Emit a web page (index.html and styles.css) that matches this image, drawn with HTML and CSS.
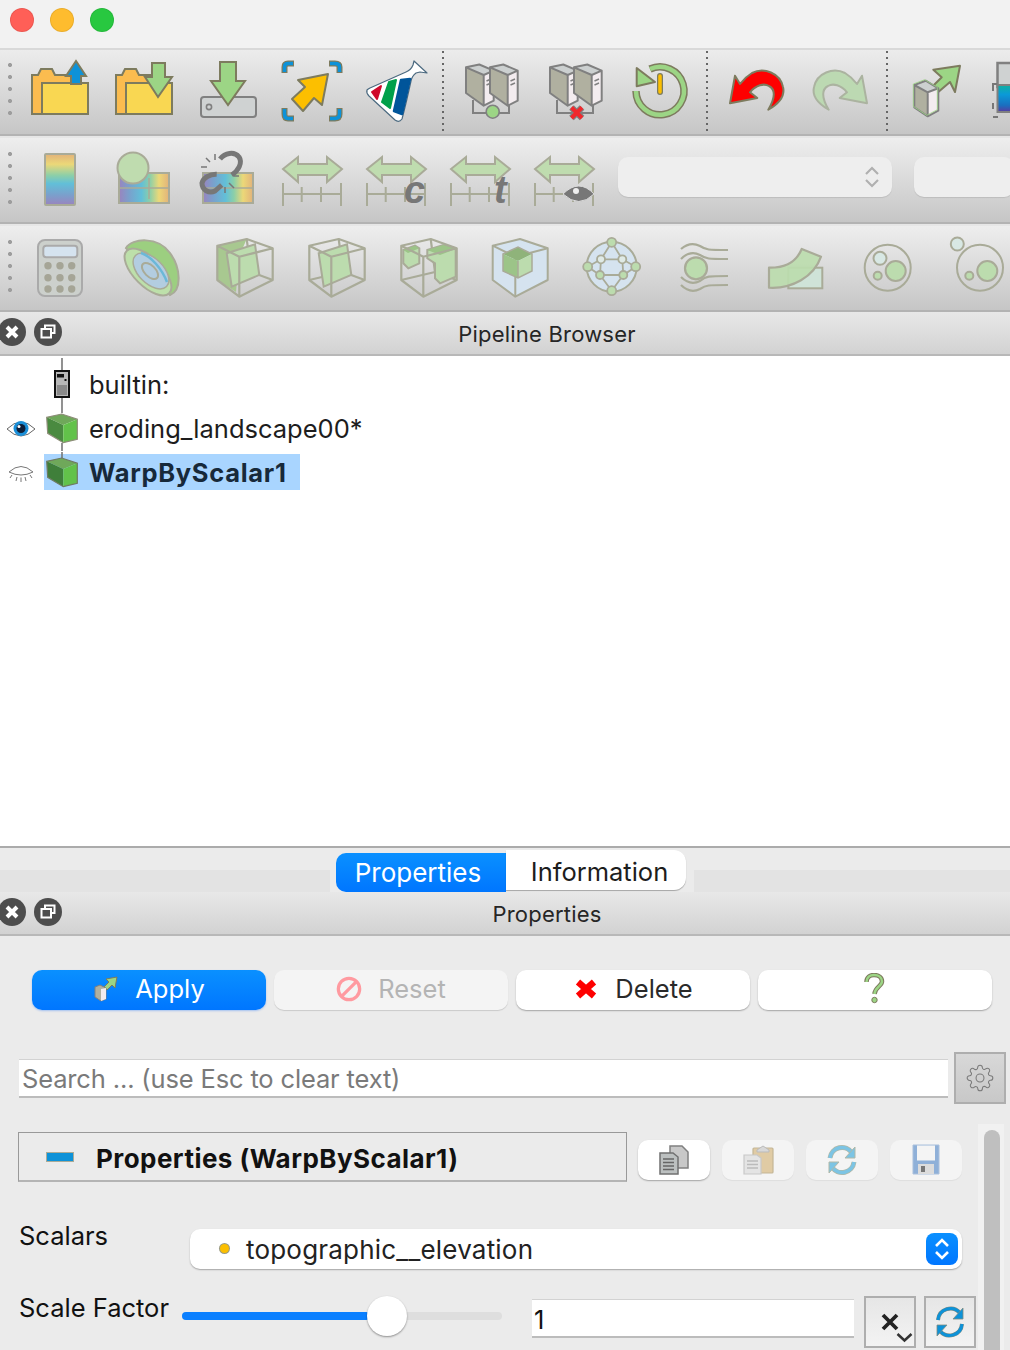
FILE: index.html
```html
<!DOCTYPE html>
<html lang="en">
<head>
<meta charset="utf-8">
<title>ParaView</title>
<link rel="stylesheet" href="styles.css">
</head>
<body>
<svg class="defs" width="0" height="0" aria-hidden="true">
  <defs>
    <linearGradient id="stripes" x1="0" y1="0" x2="0" y2="1">
      <stop offset="0" stop-color="#e2b27a"/><stop offset=".2" stop-color="#ecd878"/><stop offset=".42" stop-color="#8ccfa8"/><stop offset=".58" stop-color="#62bfd8"/><stop offset=".8" stop-color="#7aa0cc"/><stop offset="1" stop-color="#9a84be"/>
    </linearGradient>
    <linearGradient id="rainbow" x1="0" y1="0" x2="1" y2="0">
      <stop offset="0" stop-color="#9a84be"/><stop offset=".2" stop-color="#7aa0cc"/><stop offset=".45" stop-color="#62bfd8"/><stop offset=".62" stop-color="#8ccfa8"/><stop offset=".8" stop-color="#ecd878"/><stop offset="1" stop-color="#e2b27a"/>
    </linearGradient>
    <linearGradient id="vivid" x1="0" y1="0" x2="0" y2="1">
      <stop offset="0" stop-color="#10b0a0"/><stop offset=".35" stop-color="#0a9ad8"/><stop offset=".75" stop-color="#1a6fc0"/><stop offset="1" stop-color="#5a3aa0"/>
    </linearGradient>
    <g id="srv">
      <path d="M6 8.300 19.300 5.500 33.700 11.700 23.700 16Z" fill="#ccd0d0"/>
      <path d="M6 8.300 23.700 16V46.700L6 34Z" fill="#b0b0a0"/>
      <path d="M23.700 16 33.700 11.700V41.700L23.700 46.700Z" fill="#f3ecef"/>
      <path d="M6 8.300 19.300 5.500 33.700 11.700V41.700L23.700 46.700 6 34ZM6 8.300 23.700 16 33.700 11.700M23.700 16V46.700" fill="none" stroke="#808080" stroke-width="2" stroke-linejoin="round"/>
      <path d="M26.500 22 31 20M26.500 26 31 24" stroke="#808080" stroke-width="1.500"/>
    </g>
    <g id="ruler" fill="none" stroke="#a9ab98" stroke-width="2">
      <path d="M3 22 18 10V17H47V10L62 22 47 35V28H18V35Z" fill="#bfdcaf"/>
      <path d="M3 36V59M3 47H61M21.700 40V55M41 40V55M61 36V59"/>
    </g>
    <g id="wire-back" fill="none" stroke="#a9ab98" stroke-width="2.200" stroke-linejoin="round">
      <path d="M34.700 4 39 37M39 37 5.300 45M39 37 60.700 45"/>
    </g>
    <g id="wire-front" fill="none" stroke="#a9ab98" stroke-width="2.200" stroke-linejoin="round">
      <path d="M5.300 10.700 34.700 4 60.700 13.300V45L27.300 61.700 5.300 45ZM5.300 10.700 27.300 21.700 60.700 13.300M27.300 21.700V61.700"/>
    </g>
  </defs>
</svg>

<div class="titlebar">
  <span class="light red"></span><span class="light yellow"></span><span class="light green"></span>
</div>

<div class="toolbar">
  <span class="handle"></span>
  <span class="slot"><svg class="ic" viewBox="0 0 64 64">
    <path d="M4 55V16H10L13 10H24L27 16H44V55Z" fill="#fbbc4f" stroke="#7d7b5e" stroke-width="2"/>
    <rect x="14" y="24" width="46" height="31" fill="#f9d752" stroke="#7d7b5e" stroke-width="2"/>
    <path d="M48 2 38 17H43V25H53V17H58Z" fill="#0d92d8" stroke="#7d7b5e" stroke-width="2"/>
  </svg></span>
  <span class="slot"><svg class="ic" viewBox="0 0 64 64">
    <path d="M4 55V16H10L13 10H24L27 16H44V55Z" fill="#fbbc4f" stroke="#7d7b5e" stroke-width="2"/>
    <rect x="14" y="24" width="46" height="31" fill="#f9d752" stroke="#7d7b5e" stroke-width="2"/>
    <path d="M40 4H53V18H60L46 38 33 18H40Z" fill="#9cd585" stroke="#7d7b5e" stroke-width="2"/>
  </svg></span>
  <span class="slot"><svg class="ic" viewBox="0 0 64 64">
    <rect x="5" y="38" width="55" height="20" rx="3" fill="#cfd2d2" stroke="#808080" stroke-width="2"/>
    <circle cx="13" cy="48" r="2.600" fill="none" stroke="#808080" stroke-width="1.600"/>
    <path d="M24 3H40V22H49L32 46 15 22H24Z" fill="#9cd585" stroke="#7d7b5e" stroke-width="2"/>
  </svg></span>
  <span class="slot"><svg class="ic" viewBox="0 0 64 64">
    <g fill="none" stroke="#7d7b5e" stroke-width="6"><path d="M4.500 14V8Q4.500 4.500 8 4.500H14M49 4.500H55Q59.500 4.500 59.500 8V14M4.500 49V55Q4.500 59.500 8 59.500H14M49 59.500H55Q59.500 59.500 59.500 55V49"/></g>
    <g fill="none" stroke="#0d92d8" stroke-width="3.500"><path d="M4.500 13V8Q4.500 4.500 8 4.500H13M50 4.500H55Q59.500 4.500 59.500 8V13M4.500 50V55Q4.500 59.500 8 59.500H13M50 59.500H55Q59.500 59.500 59.500 55V50"/></g>
    <path d="M48 15 18 21 25 28 12 40 23 52 34 39 42 46Z" fill="#fcbf00" stroke="#7d7b5e" stroke-width="2" stroke-linejoin="round"/>
  </svg></span>
  <span class="slot"><svg class="ic" viewBox="0 0 64 64">
    <path d="M3 31Q2 34 5 37L31 61Q35 64 38 60Q42 45 47 22Q48 17 52 14L56 13 63 14 50 2 49 6Q47 11 42 13L6 29Q4 30 3 31Z" fill="#fff" stroke="#4c6a80" stroke-width="1.200" stroke-linejoin="round"/>
    <path d="M8 33 17 27 13 40Z" fill="#cf0a2c" stroke="#cf0a2c" stroke-width="2" stroke-linejoin="round"/>
    <path d="M25 23 32 21 26 49 18 43Z" fill="#00a04a" stroke="#00a04a" stroke-width="2" stroke-linejoin="round"/>
    <path d="M37 21 46 20 38 55 30 52Z" fill="#00559a" stroke="#00559a" stroke-width="2.500" stroke-linejoin="round"/>
  </svg></span>
  <span class="sep"></span>
  <span class="slot"><svg class="ic" viewBox="0 0 64 64">
    <path d="M13 41V54H49V42" fill="none" stroke="#808080" stroke-width="2"/>
    <use href="#srv"/><use href="#srv" x="24"/>
    <circle cx="32.700" cy="52.700" r="6.500" fill="#9cd585" stroke="#808080" stroke-width="1.600"/>
  </svg></span>
  <span class="slot"><svg class="ic" viewBox="0 0 64 64">
    <path d="M13 41V54H49V42" fill="none" stroke="#808080" stroke-width="2"/>
    <use href="#srv"/><use href="#srv" x="24"/>
    <path d="M27.500 48.500 38 59M38 48.500 27.500 59" stroke="#808080" stroke-width="6.500"/>
    <path d="M27.500 48.500 38 59M38 48.500 27.500 59" stroke="#f0282c" stroke-width="4"/>
  </svg></span>
  <span class="slot"><svg class="ic" viewBox="0 0 64 64">
    <path d="M22 10A24 24 0 1 1 8 32" fill="none" stroke="#7d7b5e" stroke-width="7.500"/>
    <path d="M22 10A24 24 0 1 1 8 32" fill="none" stroke="#9cd585" stroke-width="4.500"/>
    <path d="M8.700 9V27.300L27 23Z" fill="#9cd585" stroke="#7d7b5e" stroke-width="2" stroke-linejoin="round"/>
    <path d="M32 17V33" stroke="#7d7b5e" stroke-width="6" stroke-linecap="round"/>
    <path d="M32 17V33" stroke="#fcbf00" stroke-width="3.500" stroke-linecap="round"/>
  </svg></span>
  <span class="sep"></span>
  <span class="slot"><svg class="ic" viewBox="0 0 64 64">
    <path d="M11 16.700 6 44.300 33.300 39 26 33.300C32 26 40 24 45 27 51 30 52 38 44.300 50.700 56 44 61 36 59 28 56 14 40 8 28 14 23 17 19 21 16 25Z" fill="#fe0000" stroke="#7d7b5e" stroke-width="2" stroke-linejoin="round"/>
  </svg></span>
  <span class="slot"><svg class="ic" viewBox="0 0 64 64">
    <path transform="translate(65 0) scale(-1 1)" d="M11 16.700 6 44.300 33.300 39 26 33.300C32 26 40 24 45 27 51 30 52 38 44.300 50.700 56 44 61 36 59 28 56 14 40 8 28 14 23 17 19 21 16 25Z" fill="#bcd9b2" stroke="#abb3a0" stroke-width="2" stroke-linejoin="round"/>
  </svg></span>
  <span class="sep"></span>
  <span class="slot"><svg class="ic" viewBox="0 0 64 64">
    <path d="M56 6.700 29.300 10.700 37.700 18.300 27.700 28.300 34.300 33 46 23 51 33Z" fill="#9cd585" stroke="#7d7b5e" stroke-width="2" stroke-linejoin="round"/>
    <path d="M10.300 26 21.700 21.700 34.300 29.300 23.700 33.300Z" fill="#ccd0d0"/>
    <path d="M10.300 26 23.700 33.300V57.300L10.300 48.300Z" fill="#b0b0a0"/>
    <path d="M23.700 33.300 34.300 29.300V51.700L23.700 57.300Z" fill="#f3ecef"/>
    <path d="M10.300 26 21.700 21.700 34.300 29.300V51.700L23.700 57.300 10.300 48.300ZM10.300 26 23.700 33.300 34.300 29.300M23.700 33.300V57.300" fill="none" stroke="#808080" stroke-width="2" stroke-linejoin="round"/>
    <path d="M10.300 26 21.700 21.700 34.300 29.300V51.700L23.700 57.300 10.300 48.300Z" fill="none" stroke="#9cd585" stroke-width="1" opacity=".8" transform="translate(-1 -1)"/>
  </svg></span>
  <span class="slot"><svg class="ic" viewBox="0 0 64 64">
    <rect x="9.500" y="4" width="40" height="24" fill="#cfd2d2" stroke="#808080" stroke-width="2.500"/>
    <rect x="9.500" y="26" width="40" height="27" fill="url(#vivid)" stroke="#808080" stroke-width="2"/>
    <path d="M5 32V25H9M5 44V50M5 58H10" fill="none" stroke="#777" stroke-width="2"/>
  </svg></span>
</div>

<div class="toolbar tb-two">
  <span class="handle"></span>
  <span class="slot"><svg class="ic" viewBox="0 0 64 64">
    <rect x="17" y="7" width="30" height="51" rx="1" fill="url(#stripes)" stroke="#a9ab98" stroke-width="2"/>
  </svg></span>
  <span class="slot"><svg class="ic" viewBox="0 0 64 64">
    <rect x="7" y="26" width="50" height="30" fill="url(#rainbow)" stroke="#a9ab98" stroke-width="2"/>
    <path d="M7 41H57M37 31V52" stroke="#a9ab98" stroke-width="1.500"/>
    <circle cx="21" cy="21" r="15.500" fill="#bfdcaf" stroke="#a9ab98" stroke-width="2"/>
  </svg></span>
  <span class="slot"><svg class="ic" viewBox="0 0 64 64">
    <rect x="7" y="26" width="50" height="30" fill="url(#rainbow)" stroke="#a9ab98" stroke-width="2"/>
    <path d="M7 41H57" stroke="#a9ab98" stroke-width="1.500"/>
    <g fill="none" stroke="#777" stroke-width="5">
      <path d="M24 12C29 6 38 4 43 10 47 16 42 24 35.700 28"/>
      <path d="M20.700 27.300C14 27 7 31 6 36 6 43 13 47 19 44L25.700 38"/>
    </g>
    <path d="M19 7V13M10 11 14 15M5 20H11M38 29H43M29 40V46M33 36 38 41" stroke="#777" stroke-width="1.500"/>
  </svg></span>
  <span class="slot"><svg class="ic" viewBox="0 0 64 64"><use href="#ruler"/></svg></span>
  <span class="slot"><svg class="ic" viewBox="0 0 64 64"><use href="#ruler"/><text class="ruler-letter" x="40" y="56">c</text></svg></span>
  <span class="slot"><svg class="ic" viewBox="0 0 64 64"><use href="#ruler"/><text class="ruler-letter" x="46" y="56">t</text></svg></span>
  <span class="slot"><svg class="ic" viewBox="0 0 64 64">
    <use href="#ruler"/>
    <path d="M31 47Q47 31 62 47 47 62 31 47Z" fill="#777" stroke="#ddd" stroke-width="1"/>
    <circle cx="44" cy="44" r="3" fill="#eee"/>
  </svg></span>
  <span class="combo-empty wide">
    <svg class="chev" viewBox="0 0 16 24"><path d="M2 9 8 3 14 9M2 15 8 21 14 15" fill="none" stroke="#b0b0b0" stroke-width="2.200"/></svg>
  </span>
  <span class="combo-empty"></span>
</div>

<div class="toolbar tb-three">
  <span class="handle handle-narrow"></span>
  <span class="slot"><svg class="ic" viewBox="0 0 64 64">
    <rect x="10" y="5" width="44" height="56" rx="7" fill="#ccd0cc" stroke="#aaa" stroke-width="2"/>
    <rect x="15.300" y="10.700" width="34" height="11.600" rx="3" fill="#d5e3ef" stroke="#aaa" stroke-width="2"/>
    <g fill="#a5a596"><circle cx="20" cy="30.700" r="3.700"/><circle cx="32" cy="30.700" r="3.700"/><circle cx="43.700" cy="30.700" r="3.700"/><circle cx="20" cy="42.700" r="3.700"/><circle cx="32" cy="42.700" r="3.700"/><circle cx="43.700" cy="42.700" r="3.700"/><circle cx="20" cy="54" r="3.700"/><circle cx="32" cy="54" r="3.700"/><circle cx="43.700" cy="54" r="3.700"/></g>
  </svg></span>
  <span class="slot"><svg class="ic" viewBox="0 0 64 64">
    <path d="M6 13C12 3 38 1 50 18 61 33 62 55 50 60Z" fill="#9ccf80" stroke="#a9ab98" stroke-width="2"/>
    <ellipse cx="28" cy="37" rx="30" ry="14" transform="rotate(45 28 37)" fill="#bde0aa" stroke="#a9ab98" stroke-width="2"/>
    <ellipse cx="31" cy="36" rx="22" ry="12.500" transform="rotate(45 31 36)" fill="#b3cde0" stroke="#a9ab98" stroke-width="1.500"/>
    <path d="M21 18C31 21 42 34 47 47" fill="none" stroke="#6bb8d8" stroke-width="2.500"/>
    <ellipse cx="30" cy="36" rx="10" ry="5.500" transform="rotate(45 30 36)" fill="none" stroke="#a9ab98" stroke-width="2"/>
  </svg></span>
  <span class="slot"><svg class="ic" viewBox="0 0 64 64">
    <use href="#wire-back"/>
    <path d="M5.300 10.700 34.700 4 27 21.700 24 57 5.300 45Z" fill="#a8c890"/>
    <path d="M14.700 18.300 43 9.300 47.300 40 19.700 51.700Z" fill="#bcdcae" stroke="#a9ab98" stroke-width="2"/>
    <use href="#wire-front"/>
  </svg></span>
  <span class="slot"><svg class="ic" viewBox="0 0 64 64">
    <use href="#wire-back"/>
    <path d="M14.700 18.300 43 9.300 47.300 40 19.700 51.700Z" fill="#bcdcae" stroke="#a9ab98" stroke-width="2"/>
    <use href="#wire-front"/>
  </svg></span>
  <span class="slot"><svg class="ic" viewBox="0 0 64 64">
    <use href="#wire-back"/>
    <path d="M7.300 15 19 10.700 23.300 13.300V28.300L12.300 33.300 7.300 28.300Z" fill="#bcdcae" stroke="#a9ab98" stroke-width="2"/>
    <path d="M7.300 15 19 10.700 23.300 13.300 12 18Z" fill="#9cc488"/>
    <path d="M31.300 15 47.300 10 59.700 14V41.700L44 48.300 39 43.300V28.300L31.300 23.300Z" fill="#bcdcae" stroke="#a9ab98" stroke-width="2"/>
    <path d="M31.300 15 47.300 10 59.700 14 44 20Z" fill="#9cc488"/>
    <use href="#wire-front"/>
  </svg></span>
  <span class="slot"><svg class="ic" viewBox="0 0 64 64">
    <path d="M4.700 10.700 32 4 59.700 13.300V45L27.300 61.700 4.700 45Z" fill="#d5e3ef" stroke="#a9ab98" stroke-width="2" stroke-linejoin="round"/>
    <path d="M4.700 10.700 27.300 21.700 59.700 13.300M27.300 21.700V61.700" fill="none" stroke="#a9ab98" stroke-width="2"/>
    <path d="M15 19 30 12 44 19 30 26Z" fill="#8fb37a"/>
    <path d="M15 19 30 26V43L15 36Z" fill="#9cc488"/>
    <path d="M30 26 44 19V36L30 43Z" fill="#bcdcae"/>
    <path d="M15 19 30 12 44 19V36L30 43 15 36ZM30 26V43" fill="none" stroke="#a9ab98" stroke-width="1.500"/>
  </svg></span>
  <span class="slot"><svg class="ic" viewBox="0 0 64 64">
    <circle cx="31.700" cy="31.700" r="25" fill="#d5e3ef" stroke="#a9ab98" stroke-width="2"/>
    <path d="M31.700 7.300 21 24.300H42.300L31.700 7.300M21 24.300 7.700 31.700 20 40H43.300L55.700 31.700 42.300 24.300M20 40 31.700 55.700 43.300 40M21 24.300 20 40M42.300 24.300 43.300 40" fill="none" stroke="#a9ab98" stroke-width="1.800"/>
    <g fill="#bcdcae" stroke="#a9ab98" stroke-width="1.800">
      <circle cx="31.700" cy="7.300" r="4.500"/><circle cx="31.700" cy="55.700" r="4.500"/><circle cx="7.700" cy="31.700" r="4.500"/><circle cx="55.700" cy="31.700" r="4.500"/><circle cx="20" cy="40" r="4"/><circle cx="43.300" cy="40" r="4"/>
      <circle cx="21" cy="24.300" r="4" fill="#dfeae6"/><circle cx="42.300" cy="24.300" r="4" fill="#dfeae6"/>
    </g>
  </svg></span>
  <span class="slot"><svg class="ic" viewBox="0 0 64 64">
    <g fill="none" stroke="#a9ab98" stroke-width="2.200">
      <path d="M9 14C16 8 22 8 28 11 34 15 36 15 56 15"/><path d="M9 24C16 17 22 17 28 20 34 24 36 24 56 24"/>
      <path d="M9 42C16 49 22 49 28 46 34 41 36 41 56 41"/><path d="M9 50C16 57 22 57 28 54 34 50 36 50 56 50"/>
    </g>
    <circle cx="24" cy="33.300" r="11" fill="#bcdcae" stroke="#a9ab98" stroke-width="2.200"/>
  </svg></span>
  <span class="slot"><svg class="ic" viewBox="0 0 64 64">
    <rect x="24.300" y="32.700" width="34" height="20.600" fill="#cfe3d8" stroke="#a9ab98" stroke-width="2"/>
    <path d="M5 32.700C20 33 32 28 37.700 14L57 21.700C50 42 28 54 5 52.700Z" fill="#bcdcae" fill-opacity=".92" stroke="#a9ab98" stroke-width="2.200" stroke-linejoin="round"/>
  </svg></span>
  <span class="slot"><svg class="ic" viewBox="0 0 64 64">
    <circle cx="31.700" cy="32.700" r="23" fill="none" stroke="#a9ab98" stroke-width="2"/>
    <g stroke="#a9ab98" stroke-width="2">
      <circle cx="24" cy="23.300" r="6.500" fill="#d8e8e4"/><circle cx="39.700" cy="36" r="10" fill="#bcdcae"/><circle cx="21.700" cy="40.700" r="4" fill="#bcdcae"/>
    </g>
  </svg></span>
  <span class="slot"><svg class="ic" viewBox="0 0 64 64">
    <circle cx="32" cy="32.700" r="23" fill="none" stroke="#a9ab98" stroke-width="2"/>
    <g stroke="#a9ab98" stroke-width="2">
      <circle cx="9.300" cy="9" r="6.500" fill="#d8e8e4"/><circle cx="39.300" cy="36" r="10" fill="#bcdcae"/><circle cx="21.300" cy="40.700" r="4" fill="#bcdcae"/>
    </g>
  </svg></span>
</div>

<header class="dock-head">
  <div class="dock-btns">
    <span class="dock-btn"><svg viewBox="0 0 28 28"><path d="M9 9 19 19M19 9 9 19" stroke="#fff" stroke-width="4"/></svg></span>
    <span class="dock-btn"><svg viewBox="0 0 28 28"><path d="M11 10V7.500H20.500V15H17.500M7.500 11H17V19.500H7.500Z" fill="none" stroke="#fff" stroke-width="2"/></svg></span>
  </div>
  <div class="dock-title">Pipeline Browser</div>
</header>

<main class="tree">
  <div class="tree-row">
    <span class="eye"></span>
    <svg class="tree-ic" viewBox="0 0 36 44">
      <path d="M18 -5V7M18 35V44" stroke="#777" stroke-width="1.600"/>
      <rect x="11" y="8" width="14" height="26" fill="#b8b8b8" stroke="#111" stroke-width="2"/>
      <rect x="13" y="11" width="7" height="3.500" fill="#111"/>
      <rect x="20.500" y="16" width="2" height="2" fill="#111"/>
      <rect x="13" y="22" width="10" height="10" fill="#8a8a8a"/>
    </svg>
    <span class="tree-label">builtin:</span>
  </div>
  <div class="tree-row">
    <span class="eye"><svg viewBox="0 0 30 20" class="eye-ic">
      <path d="M1 10Q15 -4 29 10 15 24 1 10Z" fill="#fff" stroke="#666" stroke-width="1"/>
      <circle cx="15" cy="9.500" r="7.500" fill="#1b8fd8"/>
      <circle cx="15" cy="9.500" r="4.500" fill="#0e1e38"/>
      <circle cx="13" cy="7.500" r="1.500" fill="#fff"/>
    </svg></span>
    <svg class="tree-ic" viewBox="0 0 36 44">
      <path d="M18 0V6M18 36V44" stroke="#777" stroke-width="1.600"/>
      <path d="M2.700 10.300 17.700 7 33.300 12.300 19.300 18Z" fill="#6fa85a"/>
      <path d="M2.700 10.300 19.300 18V35.700L3.700 26.300Z" fill="#4a8a40"/>
      <path d="M19.300 18 33.300 12.300V32.300L19.300 35.700Z" fill="#62c24a"/>
      <path d="M2.700 10.300 17.700 7 33.300 12.300V32.300L19.300 35.700 3.700 26.300Z" fill="none" stroke="#8d8d78" stroke-width="1.200"/>
    </svg>
    <span class="tree-label">eroding_landscape00*</span>
  </div>
  <div class="tree-row">
    <span class="eye"><svg viewBox="0 0 30 20" class="eye-ic">
      <path d="M3 9Q15 -2 27 9Q15 15 3 9ZM6 12 4 15M11 14 10 18M15 14.500V19M19 14 20 18M24 12 26 15" fill="none" stroke="#777" stroke-width="1"/>
    </svg></span>
    <div class="tree-selected">
      <svg class="tree-ic" viewBox="0 0 36 36">
        <path d="M18 -3V3" stroke="#777" stroke-width="1.600"/>
        <path d="M2.700 6.300 17.700 3 33.300 8.300 19.300 14Z" fill="#6fa85a"/>
        <path d="M2.700 6.300 19.300 14V31.700L3.700 22.300Z" fill="#3f7f3a"/>
        <path d="M19.300 14 33.300 8.300V28.300L19.300 31.700Z" fill="#62c24a"/>
        <path d="M2.700 6.300 17.700 3 33.300 8.300V28.300L19.300 31.700 3.700 22.300Z" fill="none" stroke="#6f7a62" stroke-width="1.200"/>
      </svg>
      <span class="tree-label strong">WarpByScalar1</span>
    </div>
  </div>
</main>

<nav class="tabs">
  <span class="tab-band band-left"></span>
  <span class="tab active">Properties</span>
  <span class="tab plain">Information</span>
  <span class="tab-band"></span>
</nav>

<header class="dock-head head-second">
  <div class="dock-btns">
    <span class="dock-btn"><svg viewBox="0 0 28 28"><path d="M9 9 19 19M19 9 9 19" stroke="#fff" stroke-width="4"/></svg></span>
    <span class="dock-btn"><svg viewBox="0 0 28 28"><path d="M11 10V7.500H20.500V15H17.500M7.500 11H17V19.500H7.500Z" fill="none" stroke="#fff" stroke-width="2"/></svg></span>
  </div>
  <div class="dock-title">Properties</div>
</header>

<section class="panel">
  <div class="actions">
    <button class="btn primary">
      <svg class="btn-ic" viewBox="0 0 26 26">
        <path d="M24 1 13 3 16 6 11 11 14 14 19 9 22 12Z" fill="#9cd585" stroke="#7d7b5e" stroke-width="1"/>
        <path d="M2 11 7 9 13 12V23L8 25 2 21Z" fill="#b0b0a0" stroke="#808080" stroke-width="1"/>
        <path d="M8 13 13 12V23L8 25Z" fill="#f3ecef"/>
      </svg><span>Apply</span></button>
    <button class="btn disabled">
      <svg class="btn-ic" viewBox="0 0 28 28">
        <circle cx="14" cy="14" r="11.500" fill="none" stroke="#ff9aa0" stroke-width="3.500"/>
        <path d="M6 22 22 6" stroke="#ff9aa0" stroke-width="3.500"/>
      </svg><span>Reset</span></button>
    <button class="btn">
      <svg class="btn-ic" viewBox="0 0 26 26">
        <path d="M5 6 21 20M21 6 5 20" stroke="#fe0000" stroke-width="6.500"/>
      </svg><span>Delete</span></button>
    <button class="btn" aria-label="Help">
      <svg class="help-ic" viewBox="0 0 22 32">
        <path d="M3.500 9C3.500 4.500 7 2 11 2 15.500 2 19 4.500 19 8.500 19 13 12 14 11.500 21" fill="none" stroke="#7d7b5e" stroke-width="4.500"/>
        <path d="M3.500 9C3.500 4.500 7 2 11 2 15.500 2 19 4.500 19 8.500 19 13 12 14 11.500 21" fill="none" stroke="#9cd585" stroke-width="2.500"/>
        <circle cx="11.500" cy="27" r="2.700" fill="#9cd585" stroke="#7d7b5e" stroke-width="1"/>
      </svg>
    </button>
  </div>

  <div class="search-row">
    <div class="field search">Search ... (use Esc to clear text)</div>
    <span class="square gear">
      <svg viewBox="0 0 24 24" class="gear-ic"><circle cx="12" cy="12" r="3.400" fill="none" stroke="#7a7a7a" stroke-width=".9"/><path fill="none" stroke="#7a7a7a" stroke-width=".9" d="M19.400 15a1.650 1.650 0 0 0 .33 1.820l.06.06a2 2 0 0 1 0 2.830 2 2 0 0 1-2.830 0l-.06-.06a1.650 1.650 0 0 0-1.820-.33 1.650 1.650 0 0 0-1 1.510V21a2 2 0 0 1-2 2 2 2 0 0 1-2-2v-.09A1.650 1.650 0 0 0 9 19.400a1.650 1.650 0 0 0-1.820.33l-.06.06a2 2 0 0 1-2.830 0 2 2 0 0 1 0-2.830l.06-.06a1.650 1.650 0 0 0 .33-1.820 1.650 1.650 0 0 0-1.510-1H3a2 2 0 0 1-2-2 2 2 0 0 1 2-2h.09A1.650 1.650 0 0 0 4.600 9a1.650 1.650 0 0 0-.33-1.820l-.06-.06a2 2 0 0 1 0-2.830 2 2 0 0 1 2.830 0l.06.06a1.650 1.650 0 0 0 1.820.33H9a1.650 1.650 0 0 0 1-1.510V3a2 2 0 0 1 2-2 2 2 0 0 1 2 2v.09a1.650 1.650 0 0 0 1 1.510 1.650 1.650 0 0 0 1.820-.33l.06-.06a2 2 0 0 1 2.830 0 2 2 0 0 1 0 2.830l-.06.06a1.650 1.650 0 0 0-.33 1.820V9a1.650 1.650 0 0 0 1.510 1H21a2 2 0 0 1 2 2 2 2 0 0 1-2 2h-.09a1.650 1.650 0 0 0-1.510 1z"/></svg>
    </span>
  </div>

  <div class="scroller">
    <div class="scroll-main">
      <div class="section-row">
        <div class="section-head">
          <span class="minus"></span>
          <span class="section-title">Properties (WarpByScalar1)</span>
        </div>
        <span class="mini"><svg class="mini-ic" viewBox="0 0 32 32">
          <path d="M12 2H24L30 8V24H12Z" fill="#c8c8c8" stroke="#808080" stroke-width="1.500"/>
          <path d="M2 9H15L20 13V30H2Z" fill="#bcc0c0" stroke="#707070" stroke-width="1.500"/>
          <path d="M5 15H16M5 18.500H16M5 22H16M5 25.500H16" stroke="#666" stroke-width="1.300"/>
        </svg></span>
        <span class="mini off"><svg class="mini-ic" viewBox="0 0 32 32">
          <rect x="11" y="4" width="20" height="25" rx="1" fill="#e0cba4" stroke="#c4b696" stroke-width="1.200"/>
          <path d="M15 6 21 2 27 6V8H15Z" fill="#d8d8d8" stroke="#bbb" stroke-width="1"/>
          <path d="M2 11H15L19 14V30H2Z" fill="#e4e4e4" stroke="#c8c8c8" stroke-width="1.200"/>
          <path d="M5 17H16M5 20.500H16M5 24H16" stroke="#bbb" stroke-width="1.300"/>
        </svg></span>
        <span class="mini off"><svg class="mini-ic" viewBox="0 0 32 32">
          <path d="M4 14A12 12 0 0 1 26 9M28 18A12 12 0 0 1 6 23" fill="none" stroke="#b0b8a8" stroke-width="5"/>
          <path d="M4 14A12 12 0 0 1 26 9M28 18A12 12 0 0 1 6 23" fill="none" stroke="#7cc4e4" stroke-width="3.500"/>
          <path d="M29 3V14H19ZM3 29V18H13Z" fill="#7cc4e4" stroke="#b0b8a8" stroke-width="1"/>
        </svg></span>
        <span class="mini off"><svg class="mini-ic" viewBox="0 0 32 32">
          <path d="M3 1H29V30H3Z" fill="#8fb0d8" stroke="#aac0dc" stroke-width="1"/>
          <rect x="7" y="1.500" width="18" height="15" fill="#f4f4f4"/>
          <rect x="8" y="20" width="16" height="10" fill="#dcdcdc"/>
          <rect x="11" y="22" width="4" height="6" fill="#777"/>
        </svg></span>
      </div>
      <div class="prop-row scalars">
        <span class="prop-label scalars-label">Scalars</span>
        <div class="select">
          <span class="dot"></span>
          <span class="select-text">topographic__elevation</span>
          <span class="stepper"><svg viewBox="0 0 32 32"><path d="M10 13 16 7 22 13M10 19 16 25 22 19" fill="none" stroke="#fff" stroke-width="2.600"/></svg></span>
        </div>
      </div>
      <div class="prop-row scale">
        <span class="prop-label scale-label">Scale Factor</span>
        <div class="slider"><span class="slider-fill"></span><span class="knob"></span></div>
        <div class="field value">1</div>
        <span class="square"><svg viewBox="0 0 52 52" class="sq-ic"><path d="M19 19 33 33M33 19 19 33" stroke="#222" stroke-width="3.800"/><path d="M33.500 38 40.500 44.500 47.500 38" fill="none" stroke="#333" stroke-width="2.500"/></svg></span>
        <span class="square"><svg viewBox="0 0 52 52" class="sq-ic">
          <path d="M14 24A12.500 12.500 0 0 1 36 17M38 28A12.500 12.500 0 0 1 16 35" fill="none" stroke="#7d8a80" stroke-width="4"/>
          <path d="M14 24A12.500 12.500 0 0 1 36 17M38 28A12.500 12.500 0 0 1 16 35" fill="none" stroke="#0d92d8" stroke-width="3"/>
          <path d="M39 12V23H29ZM13 40V29H23Z" fill="#0d92d8" stroke="#7d8a80" stroke-width=".8"/>
        </svg></span>
      </div>
    </div>
    <div class="scrollbar"><span class="thumb"></span></div>
  </div>
</section>
</body>
</html>
```

FILE: styles.css
```css
* { box-sizing: border-box; }
html, body { margin: 0; padding: 0; }
body {
  width: 1010px;
  height: 1350px;
  overflow: hidden;
  background: #ebebeb;
  color: #1d1d1d;
  font-family: Inter, "Liberation Sans", sans-serif;
  display: flex;
  flex-direction: column;
}
.defs { position: absolute; }

.titlebar {
  flex: none;
  height: 50px;
  padding: 8px 0 0 10px;
  display: flex;
  gap: 16px;
  background: #f2f2f2;
  border-bottom: 2px solid #d9d9d9;
}
.light { width: 24px; height: 24px; border-radius: 50%; border: 1px solid rgba(0,0,0,.08); }
.red { background: #ff5f57; }
.yellow { background: #febc2e; }
.green { background: #28c840; }

.toolbar {
  flex: none;
  height: 86px;
  display: flex;
  align-items: center;
  overflow: hidden;
  white-space: nowrap;
  padding-bottom: 2px;
  background: linear-gradient(#ececec, #c6c6c6);
  border-bottom: 2px solid #b3b3b3;
}
.tb-two, .tb-three { height: 88px; border-top: 2px solid #e6e6e6; background: linear-gradient(#eeeeee, #c6c6c6); }
.handle {
  flex: none;
  width: 18px;
  height: 60px;
  background: radial-gradient(circle at 10px 6px, #9d9d9d 1.800px, transparent 2.300px) 0 -2px / 20px 12px;
}
.tb-two .handle, .tb-three .handle { background-position: 0 -1px; }
.handle-narrow { width: 14px; }
.slot { flex: none; width: 84px; height: 64px; display: flex; justify-content: center; }
.tb-three .slot { width: 92px; }
.ic { width: 64px; height: 64px; display: block; overflow: visible; }
.sep {
  flex: none;
  width: 12px;
  height: 80px;
  background: repeating-linear-gradient(#666 0 2px, transparent 2px 6px) 4px 0 / 2px 100% no-repeat;
}
.ruler-letter { font: italic 700 38px "Liberation Sans", sans-serif; fill: #777; }
.combo-empty {
  flex: none;
  width: 100px;
  height: 40px;
  margin-left: 22px;
  margin-top: -4px;
  padding-right: 12px;
  background: #eeeeee;
  border-radius: 10px;
  box-shadow: 0 1px 1px rgba(0,0,0,.1);
  display: flex;
  align-items: center;
  justify-content: flex-end;
}
.combo-empty.wide { width: 274px; margin-left: 12px; }
.chev { width: 16px; height: 24px; }

.dock-head {
  flex: none;
  height: 44px;
  display: flex;
  align-items: center;
  background: linear-gradient(#e8e8e8, #d2d2d2);
  border-bottom: 2px solid #b8b8b8;
}
.dock-btns { flex: none; width: 84px; display: flex; gap: 8px; margin: -2px 2px 0 -2px; }
.dock-btn { width: 28px; height: 28px; border-radius: 50%; background: #4d4d4d; display: block; }
.dock-btn svg { display: block; }
.dock-title { flex: 1; text-align: center; font-size: 22px; letter-spacing: .2px; color: #262626; padding-top: 2px; }

.tree {
  flex: none;
  height: 492px;
  padding-top: 7px;
  background: #fff;
  border-bottom: 2px solid #ababab;
}
.tree-row { height: 44px; display: flex; align-items: center; }
.eye { flex: none; width: 44px; padding-left: 6px; }
.eye-ic { display: block; width: 30px; height: 20px; }
.tree-ic { flex: none; width: 36px; display: block; height: 44px; overflow: visible; }
.tree-selected .tree-ic { height: 36px; }
.tree-label { margin-left: 9px; font-size: 25.500px; line-height: 30px; white-space: nowrap; }
.tree-selected { display: flex; align-items: center; height: 36px; margin-top: -2px; padding: 2px 13px 0 0; background: #a9d5ff; }
.strong { font-weight: 700; color: #17293a; letter-spacing: .7px; }

.tabs {
  flex: none;
  height: 44px;
  display: flex;
  align-items: flex-end;
  background: #ebebeb;
}
.tab-band { flex: 1; height: 22px; background: #e3e3e3; margin-left: 8px; }
.band-left { flex: none; width: 330px; margin: 0 6px 0 0; }
.tab {
  flex: none;
  font-size: 26px;
  display: flex;
  align-items: center;
  justify-content: center;
}
.active {
  width: 170px;
  height: 39px;
  padding-right: 6px;
  color: #fff;
  background: linear-gradient(#0a90ff, #0076ff);
  border-radius: 10px 0 0 10px;
}
.plain {
  width: 180px;
  height: 40px;
  margin-bottom: 2px;
  padding: 3px 0 0 7px;
  font-size: 25.500px;
  background: #fff;
  border-radius: 0 12px 12px 0;
  box-shadow: 0 1px 1px rgba(0,0,0,.3);
}

.panel { flex: 1; min-height: 0; padding-top: 34px; }
.actions { display: flex; gap: 8px; padding-left: 32px; }
.btn {
  width: 234px;
  height: 40px;
  padding: 0 0 3px;
  border: 0;
  border-radius: 10px;
  background: #fff;
  color: #2a2a2a;
  font: 25.500px Inter, "Liberation Sans", sans-serif;
  display: flex;
  align-items: center;
  justify-content: center;
  gap: 16px;
  box-shadow: 0 1px 1.500px rgba(0,0,0,.3);
}
.primary { background: linear-gradient(#0a90ff, #0076ff); color: #fff; box-shadow: 0 1px 2px rgba(0,100,255,.3); }
.disabled { background: #f4f4f4; color: #b4b4b4; box-shadow: 0 1px 1px rgba(0,0,0,.14); }
.btn-ic { width: 26px; height: 26px; flex: none; }
.help-ic { width: 22px; height: 32px; margin-right: 2px; }

.search-row { display: flex; align-items: center; margin-top: 42px; padding-left: 19px; gap: 6px; }
.field {
  background: #fff;
  border-top: 1px solid #d2d2d2;
  border-bottom: 2px solid #bcbcbc;
  font-size: 25.500px;
  display: flex;
  align-items: center;
}
.search { width: 929px; height: 39px; padding: 2px 0 0 3px; letter-spacing: -.15px; color: #7a7a7a; white-space: nowrap; }
.square {
  flex: none;
  width: 52px;
  height: 52px;
  display: block;
  border: 2px solid #aeaeae;
  background: linear-gradient(#e6e6e6, #f3f3f3);
}
.gear { background: linear-gradient(#d8d8d8, #c8c8c8); padding: 10px; }
.gear-ic { width: 28px; height: 28px; display: block; }
.sq-ic { width: 52px; height: 52px; display: block; margin: -2px; }

.scroller { display: flex; margin-top: 20px; height: 226px; }
.scroll-main { flex: none; width: 978px; padding: 8px 0 0 18px; }
.scrollbar { flex: none; width: 26px; background: #f1f1f1; padding: 6px 4px 0 6px; }
.thumb { display: block; height: 100%; background: #bfbfbf; border-radius: 8px 8px 0 0; }

.section-row { display: flex; gap: 12px; align-items: flex-start; }
.section-head {
  flex: none;
  width: 609px;
  height: 50px;
  margin-right: -1px;
  padding: 3px 0 0 28px;
  display: flex;
  align-items: center;
  gap: 23px;
  border: 1px solid #999;
  border-bottom: 2px solid #b4b4b4;
}
.minus { width: 26px; height: 8px; margin-top: -3px; background: #0d92d8; box-shadow: 0 0 0 1px #a9ab98; }
.section-title { font-size: 26px; font-weight: 700; letter-spacing: .45px; color: #111; white-space: nowrap; }
.mini {
  flex: none;
  width: 72px;
  height: 40px;
  margin-top: 8px;
  border-radius: 10px;
  background: #fff;
  box-shadow: 0 1px 1.500px rgba(0,0,0,.3);
  display: flex;
  align-items: center;
  justify-content: center;
}
.mini.off { background: #f4f4f4; box-shadow: 0 1px 1px rgba(0,0,0,.06); }
.mini-ic { width: 32px; height: 32px; }

.prop-row { display: flex; align-items: flex-start; }
.scalars { margin-top: 47px; }
.scale { margin-top: 27px; }
.prop-label { flex: none; font-size: 25.500px; line-height: 28px; color: #111; white-space: nowrap; margin-left: 1px; }
.scalars-label { width: 171px; margin-top: -7px; }
.scale-label { width: 163px; margin-top: -2px; }
.select {
  flex: none;
  width: 772px;
  height: 40px;
  display: flex;
  align-items: center;
  padding-left: 30px;
  background: #fff;
  border-radius: 10px;
  box-shadow: 0 1px 1.500px rgba(0,0,0,.3);
}
.dot { width: 9px; height: 9px; margin-top: -2px; border-radius: 50%; background: #fcbf00; box-shadow: 0 0 0 1px #9a9a80; }
.select-text { margin-left: 17px; font-size: 26px; letter-spacing: .2px; flex: 1; color: #222; }
.stepper { width: 32px; height: 32px; margin-right: 4px; border-radius: 8px; background: linear-gradient(#0a90ff, #0076ff); }
.stepper svg { display: block; }
.slider {
  flex: none;
  position: relative;
  width: 320px;
  height: 8px;
  margin-top: 16px;
  border-radius: 4px;
  background: #dedede;
}
.slider-fill { display: block; width: 188px; height: 8px; border-radius: 4px; background: #0a7fff; }
.knob {
  position: absolute;
  left: 185px;
  top: -16px;
  width: 40px;
  height: 40px;
  border-radius: 50%;
  background: #fff;
  box-shadow: 0 1px 2px rgba(0,0,0,.4);
}
.value { flex: none; width: 322px; height: 39px; margin: 3px 10px 0 30px; padding: 2px 0 0 2px; color: #111; }
.scale .square + .square { margin-left: 8px; }
```
